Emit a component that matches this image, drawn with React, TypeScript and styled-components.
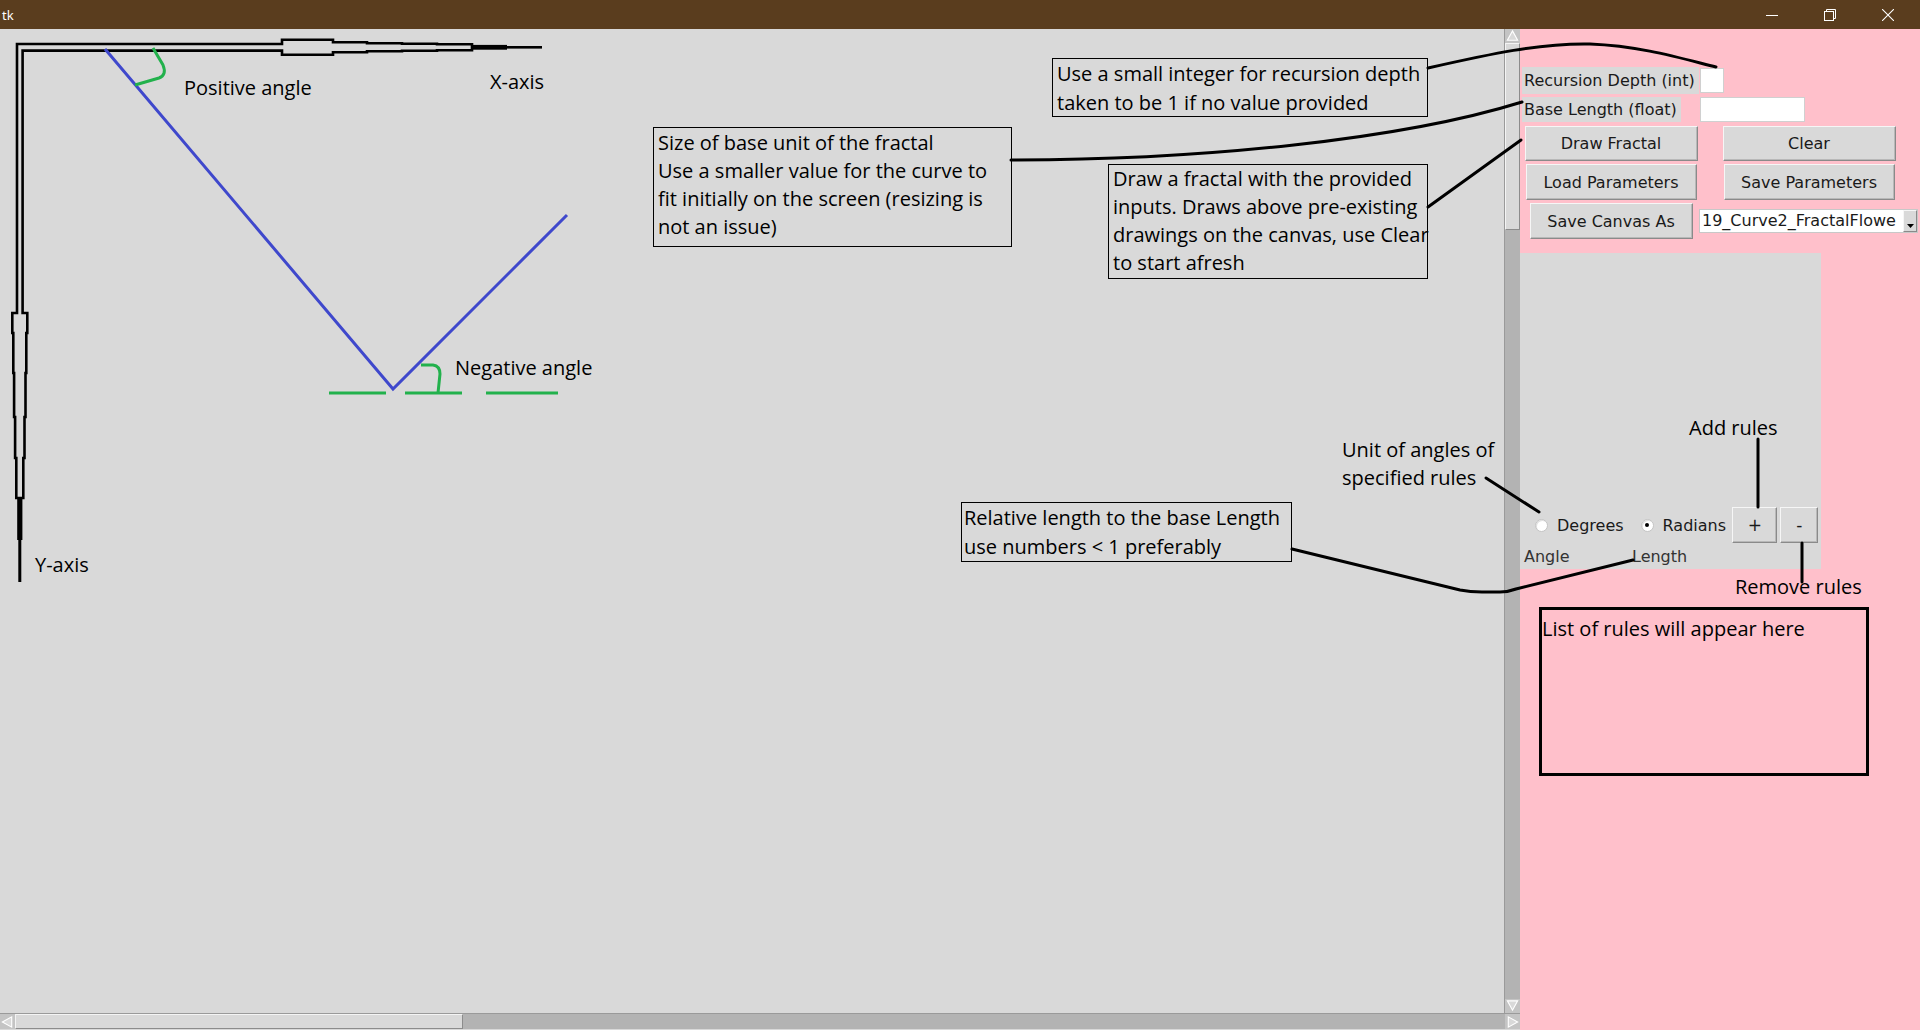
import React from 'react';
import styled, { createGlobalStyle } from 'styled-components';

const TK_FONT = `"DejaVu Sans", Verdana, sans-serif`;
const NOTE_FONT = `"Open Sans", "DejaVu Sans", sans-serif`;

const GlobalStyle = createGlobalStyle`
  html, body {
    margin: 0;
    padding: 0;
    overflow: hidden;
    background: #d9d9d9;
  }
`;

const Window = styled.div`
  position: relative;
  width: 1920px;
  height: 1030px;
  display: flex;
  flex-direction: column;
  overflow: hidden;
  background: #d9d9d9;
`;

const TitleBar = styled.div`
  height: 29px;
  flex: none;
  display: flex;
  align-items: center;
  background: #5a3d1e;
  color: #fff;
  font: 13px "Noto Sans", sans-serif;
  padding: 0 3px 0 2px;
`;

const TitleText = styled.span`
  flex: 1;
`;

const WinButton = styled.div`
  width: 58px;
  height: 29px;
  display: flex;
  align-items: center;
  justify-content: center;
`;

const Body = styled.div`
  flex: 1;
  display: flex;
  min-height: 0;
`;

const CanvasPane = styled.div`
  width: 1520px;
  flex: none;
  display: flex;
  flex-direction: column;
`;

const CanvasRow = styled.div`
  flex: 1;
  display: flex;
  min-height: 0;
`;

const Canvas = styled.div`
  position: relative;
  flex: 1;
  background: #d9d9d9;
  overflow: hidden;
`;

const DrawingLayer = styled.svg`
  position: absolute;
  left: 0;
  top: 0;
`;

const VScroll = styled.div`
  width: 15px;
  flex: none;
  display: flex;
  flex-direction: column;
  background: #b3b3b3;
  border-left: 1px solid #9a9a9a;
`;

const HScroll = styled.div`
  height: 15px;
  flex: none;
  display: flex;
  background: #b3b3b3;
  border-top: 1px solid #9a9a9a;
`;

const BottomGap = styled.div`
  height: 1px;
  flex: none;
  background: #d9d9d9;
`;

const ArrowBox = styled.div<{ $vertical?: boolean }>`
  flex: none;
  width: 15px;
  height: ${p => (p.$vertical ? '14px' : '15px')};
  background: #c4c4c4;
  display: flex;
  align-items: center;
  justify-content: center;
`;

const Thumb = styled.div<{ $vertical?: boolean; $size: number }>`
  flex: none;
  box-sizing: border-box;
  ${p => (p.$vertical ? `height: ${p.$size}px;` : `width: ${p.$size}px;`)}
  background: #d9d9d9;
  border: 1px solid;
  border-color: #f4f4f4 #8c8c8c #8c8c8c #f4f4f4;
`;

const Trough = styled.div`
  flex: 1;
`;

const Panel = styled.div`
  width: 400px;
  flex: none;
  background: #ffc0cb;
  padding-top: 38px;
  display: flex;
  flex-direction: column;
  font-family: ${TK_FONT};
  font-size: 16px;
  color: #1a1a1a;
`;

const FieldGrid = styled.div`
  display: grid;
  grid-template-columns: 178px 1fr;
  grid-template-rows: 27px 25px;
  row-gap: 3px;
  padding-left: 2px;
`;

const FieldLabel = styled.div`
  justify-self: start;
  display: flex;
  align-items: center;
  background: #d9d9d9;
  padding: 0 4px 0 2px;
  white-space: nowrap;
`;

const Entry = styled.div<{ $w: number }>`
  align-self: center;
  width: ${p => p.$w}px;
  height: 25px;
  box-sizing: border-box;
  background: #fff;
  border: 1px solid #d0d0d0;
`;

const ButtonGrid = styled.div`
  display: grid;
  grid-template-columns: 178px 218px;
  grid-template-rows: 35px 36px 36px;
  row-gap: 3px;
  padding-left: 2px;
  margin-top: 4px;
`;

const TkButton = styled.button<{ $w: number }>`
  justify-self: center;
  width: ${p => p.$w}px;
  height: 100%;
  padding: 0;
  font: inherit;
  color: inherit;
  background: #d9d9d9;
  border: 1px solid;
  border-color: #f6f6f6 #8a8a8a #8a8a8a #f6f6f6;
  box-shadow: inset -1px -1px 0 #b8b8b8;
`;

const Combo = styled.div`
  justify-self: start;
  align-self: center;
  width: 219px;
  height: 24px;
  margin-left: -1px;
  box-sizing: border-box;
  display: flex;
  background: #fff;
  border: 1px solid #c8c8c8;
`;

const ComboText = styled.div`
  flex: 1;
  overflow: hidden;
  white-space: nowrap;
  padding-left: 2px;
  line-height: 22px;
`;

const ComboButton = styled.div`
  width: 14px;
  flex: none;
  box-sizing: border-box;
  background: #d9d9d9;
  border: 1px solid;
  border-color: #f6f6f6 #8a8a8a #8a8a8a #f6f6f6;
  display: flex;
  align-items: flex-end;
  justify-content: center;
  padding-bottom: 3px;
`;

const RuleFrame = styled.div`
  margin-top: 14px;
  width: 301px;
  height: 316px;
  background: #d9d9d9;
  display: flex;
  flex-direction: column;
  justify-content: flex-end;
`;

const RadioRow = styled.div`
  height: 36px;
  display: flex;
  align-items: center;
  padding-left: 15px;
`;

const RadioOption = styled.label<{ $gapAfter: number }>`
  display: flex;
  align-items: center;
  gap: 9px;
  margin-right: ${p => p.$gapAfter}px;
`;

const RadioDot = styled.span<{ $on?: boolean }>`
  position: relative;
  width: 13px;
  height: 13px;
  box-sizing: border-box;
  border-radius: 50%;
  background: #fff;
  border: 1px solid #c4c4c4;
  box-shadow: inset 1px 1px 0 #e0e0e0;
  &::after {
    content: '';
    display: ${p => (p.$on ? 'block' : 'none')};
    position: absolute;
    left: 3.5px;
    top: 3.5px;
    width: 4px;
    height: 4px;
    border-radius: 50%;
    background: #000;
  }
`;

const SmallButton = styled(TkButton)`
  height: 36px;
  margin-right: 3px;
  font-size: 17px;
`;

const AxisLabels = styled.div`
  height: 26px;
  display: grid;
  grid-template-columns: 108px auto;
  align-items: center;
  padding-left: 4px;
  color: #333;
`;

const Overlay = styled.div`
  position: absolute;
  left: 0;
  top: 0;
  width: 1920px;
  height: 1030px;
  pointer-events: none;
`;

const Connectors = styled.svg`
  position: absolute;
  left: 0;
  top: 0;
`;

const Note = styled.div<{ $x: number; $y: number; $lh?: number }>`
  position: absolute;
  left: ${p => p.$x}px;
  top: ${p => p.$y}px;
  font-family: ${NOTE_FONT};
  font-size: 20px;
  line-height: ${p => p.$lh ?? 28}px;
  color: #000;
  white-space: nowrap;
`;

const NoteBox = styled.div<{ $x: number; $y: number; $w: number; $h: number; $pad?: string; $lh?: number; $thick?: boolean }>`
  position: absolute;
  left: ${p => p.$x}px;
  top: ${p => p.$y}px;
  width: ${p => p.$w}px;
  height: ${p => p.$h}px;
  box-sizing: border-box;
  border: ${p => (p.$thick ? 3 : 1)}px solid #000;
  padding: ${p => p.$pad ?? '0 0 0 4px'};
  font-family: ${NOTE_FONT};
  font-size: 20px;
  line-height: ${p => p.$lh ?? 28}px;
  color: #000;
  white-space: nowrap;
`;

type Dir = 'up' | 'down' | 'left' | 'right';

const ScrollArrow: React.FC<{ dir: Dir }> = ({ dir }) => {
  const pts = {
    up: '7.5,2 13,12 2,12',
    down: '2,2 13,2 7.5,12',
    left: '2,7.5 12,2 12,13',
    right: '3,2 13,7.5 3,13',
  }[dir];
  const vertical = dir === 'up' || dir === 'down';
  return (
    <ArrowBox $vertical={vertical}>
      <svg width="15" height="14" viewBox="0 0 15 15">
        <polygon points={pts} fill="#d9d9d9" stroke="#fff" strokeWidth="1.2" />
      </svg>
    </ArrowBox>
  );
};

// axes are drawn as one hollow stepped outline, then solid tips
const AXIS_Y = 47.3;
const AXIS_X = 19.8;
const CORNER_OUT = 17;
const CORNER_IN = 22.6;

// [from, to, half-thickness]
const xHollow: [number, number, number][] = [
  [282, 333, 7.5],
  [333, 367, 5],
  [367, 402, 4],
  [402, 437, 3.5],
  [437, 472, 3],
];
const xSolid: [number, number, number][] = [
  [472, 507, 2.4],
  [507, 542, 1.3],
];
const yHollow: [number, number, number][] = [
  [313, 333, 7.5],
  [333, 373, 6.5],
  [373, 417, 5.7],
  [417, 458, 4.7],
  [458, 498, 3.5],
];
const ySolid: [number, number, number][] = [
  [498, 540, 2.6],
  [540, 582, 1.5],
];

function axisOutline(): string {
  const pts: [number, number][] = [];
  // left side of the y axis, bottom to top
  [...yHollow].reverse().forEach(([a, b, h]) => {
    pts.push([AXIS_X - h, b], [AXIS_X - h, a]);
  });
  pts.push([CORNER_OUT, 313], [CORNER_OUT, 44], [282, 44]);
  // top side of the x axis
  xHollow.forEach(([a, b, h]) => {
    pts.push([a, AXIS_Y - h], [b, AXIS_Y - h]);
  });
  // bottom side, back to the corner
  [...xHollow].reverse().forEach(([a, b, h]) => {
    pts.push([b, AXIS_Y + h], [a, AXIS_Y + h]);
  });
  pts.push([282, 50.6], [CORNER_IN, 50.6], [CORNER_IN, 313]);
  // right side of the y axis, top to bottom
  yHollow.forEach(([a, b, h]) => {
    pts.push([AXIS_X + h, a], [AXIS_X + h, b]);
  });
  return 'M' + pts.map(([x, y]) => `${x},${y}`).join(' L') + ' Z';
}

const Drawing: React.FC = () => (
  <DrawingLayer width="1505" height="984" viewBox="0 29 1505 984">
    <path d={axisOutline()} fill="none" stroke="#000" strokeWidth="2.6" strokeLinejoin="miter" />
    {xSolid.map(([a, b, h]) => (
      <rect key={`x${a}`} x={a - 1} y={AXIS_Y - h} width={b - a + 1} height={h * 2} fill="#000" />
    ))}
    {ySolid.map(([a, b, h]) => (
      <rect key={`y${a}`} x={AXIS_X - h} y={a - 1} width={h * 2} height={b - a + 1} fill="#000" />
    ))}
    <polyline points="105,49 393,389 567,215" fill="none" stroke="#3f48cc" strokeWidth="3" />
    <g fill="none" stroke="#22b14c" strokeWidth="3">
      <path d="M153,48 L163,65 Q167,75 159,78 L135,85" />
      <path d="M421,365 L433,365 Q440,366 440,374 L438,393" />
      <line x1="329" y1="393" x2="386" y2="393" />
      <line x1="405" y1="393" x2="462" y2="393" />
      <line x1="486" y1="393" x2="558" y2="393" />
    </g>
  </DrawingLayer>
);

const App: React.FC = () => {
  return (
    <Window>
      <GlobalStyle />
      <TitleBar>
        <TitleText>tk</TitleText>
        <WinButton>
          <svg width="12" height="12" viewBox="0 0 12 12">
            <line x1="0" y1="6.5" x2="12" y2="6.5" stroke="#fff" strokeWidth="1" />
          </svg>
        </WinButton>
        <WinButton>
          <svg width="12" height="12" viewBox="0 0 12 12">
            <rect x="0.5" y="2.5" width="9" height="9" fill="none" stroke="#fff" strokeWidth="1" />
            <path d="M2.5,2.5 L2.5,0.5 L11.5,0.5 L11.5,9.5 L9.5,9.5" fill="none" stroke="#fff" strokeWidth="1" />
          </svg>
        </WinButton>
        <WinButton>
          <svg width="12" height="12" viewBox="0 0 12 12">
            <path d="M0,0 L12,12 M12,0 L0,12" stroke="#fff" strokeWidth="1.1" />
          </svg>
        </WinButton>
      </TitleBar>

      <Body>
        <CanvasPane>
          <CanvasRow>
            <Canvas>
              <Drawing />
            </Canvas>
            <VScroll>
              <ScrollArrow dir="up" />
              <Thumb $vertical $size={187} />
              <Trough />
              <ScrollArrow dir="down" />
            </VScroll>
          </CanvasRow>
          <HScroll>
            <ScrollArrow dir="left" />
            <Thumb $size={448} />
            <Trough />
            <ScrollArrow dir="right" />
          </HScroll>
          <BottomGap />
        </CanvasPane>

        <Panel>
          <FieldGrid>
            <FieldLabel>Recursion Depth (int)</FieldLabel>
            <Entry $w={24} />
            <FieldLabel>Base Length (float)</FieldLabel>
            <Entry $w={105} />
          </FieldGrid>

          <ButtonGrid>
            <TkButton $w={173}>Draw Fractal</TkButton>
            <TkButton $w={173}>Clear</TkButton>
            <TkButton $w={171}>Load Parameters</TkButton>
            <TkButton $w={171}>Save Parameters</TkButton>
            <TkButton $w={163}>Save Canvas As</TkButton>
            <Combo>
              <ComboText>19_Curve2_FractalFlowe</ComboText>
              <ComboButton>
                <svg width="7" height="4" viewBox="0 0 7 4">
                  <polygon points="0,0 7,0 3.5,4" fill="#000" />
                </svg>
              </ComboButton>
            </Combo>
          </ButtonGrid>

          <RuleFrame>
            <RadioRow>
              <RadioOption $gapAfter={17}>
                <RadioDot />
                Degrees
              </RadioOption>
              <RadioOption $gapAfter={6}>
                <RadioDot $on />
                Radians
              </RadioOption>
              <SmallButton $w={46}>+</SmallButton>
              <SmallButton $w={38}>-</SmallButton>
            </RadioRow>
            <AxisLabels>
              <span>Angle</span>
              <span>Length</span>
            </AxisLabels>
          </RuleFrame>
        </Panel>
      </Body>

      <Overlay>
        <Connectors width="1920" height="1030" viewBox="0 0 1920 1030">
          <g fill="none" stroke="#000" strokeWidth="3" strokeLinecap="round">
            <path d="M1428,68 C1490,54 1540,43 1590,44 C1640,46 1680,58 1716,67" />
            <path d="M1011,160 C1200,160 1400,140 1522,102" />
            <line x1="1428" y1="207" x2="1521" y2="140" />
            <line x1="1486" y1="478" x2="1539" y2="512" />
            <line x1="1758" y1="439" x2="1758" y2="507" />
            <line x1="1802" y1="543" x2="1802" y2="582" />
            <path d="M1292,549 L1460,590 Q1470,592 1482,592 L1500,592 Q1508,592 1516,589 L1633,560" />
          </g>
        </Connectors>

        <Note $x={184} $y={74}>Positive angle</Note>
        <Note $x={490} $y={68}>X-axis</Note>
        <Note $x={455} $y={354}>Negative angle</Note>
        <Note $x={35} $y={551}>Y-axis</Note>

        <NoteBox $x={1052} $y={58} $w={376} $h={59} $lh={29}>
          Use a small integer for recursion depth
          <br />
          taken to be 1 if no value provided
        </NoteBox>
        <NoteBox $x={653} $y={127} $w={359} $h={120} $pad="1px 0 0 4px">
          Size of base unit of the fractal
          <br />
          Use a smaller value for the curve to
          <br />
          fit initially on the screen (resizing is
          <br />
          not an issue)
        </NoteBox>
        <NoteBox $x={1108} $y={164} $w={320} $h={115}>
          Draw a fractal with the provided
          <br />
          inputs. Draws above pre-existing
          <br />
          drawings on the canvas, use Clear
          <br />
          to start afresh
        </NoteBox>
        <NoteBox $x={961} $y={502} $w={331} $h={60} $lh={29} $pad="0 0 0 2px">
          Relative length to the base Length
          <br />
          use numbers &lt; 1 preferably
        </NoteBox>

        <Note $x={1342} $y={436}>
          Unit of angles of
          <br />
          specified rules
        </Note>
        <Note $x={1689} $y={414}>Add rules</Note>
        <Note $x={1735} $y={573}>Remove rules</Note>

        <NoteBox $x={1539} $y={607} $w={330} $h={169} $thick $pad="5px 0 0 0">
          List of rules will appear here
        </NoteBox>
      </Overlay>
    </Window>
  );
};

export default App;
